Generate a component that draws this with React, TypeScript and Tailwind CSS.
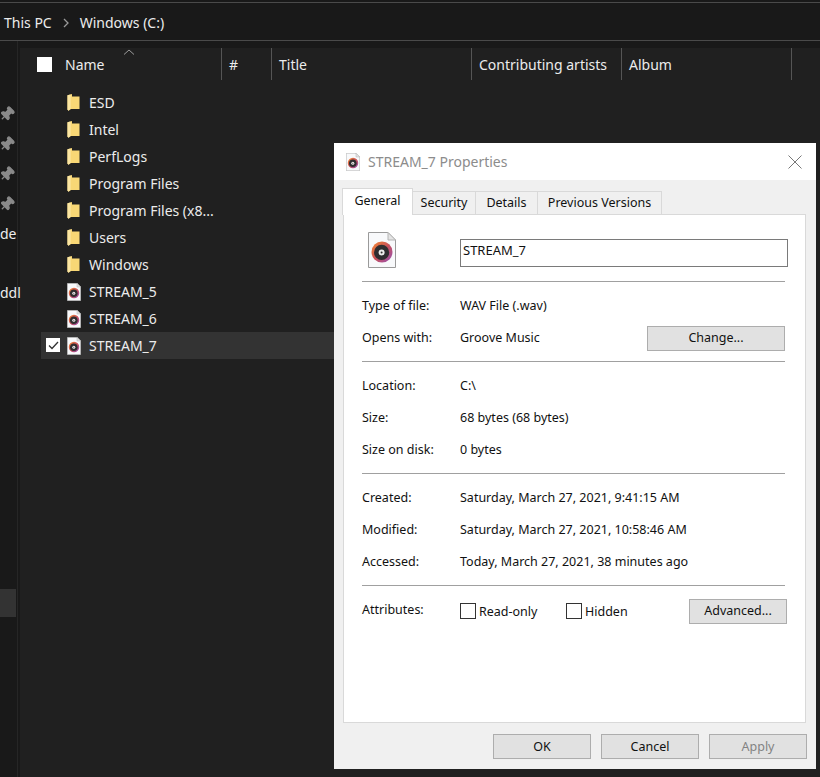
import { Pin } from "lucide-react";

const rows = [
  { name: "ESD", type: "folder" },
  { name: "Intel", type: "folder" },
  { name: "PerfLogs", type: "folder" },
  { name: "Program Files", type: "folder" },
  { name: "Program Files (x8...", type: "folder" },
  { name: "Users", type: "folder" },
  { name: "Windows", type: "folder" },
  { name: "STREAM_5", type: "wav" },
  { name: "STREAM_6", type: "wav" },
  { name: "STREAM_7", type: "wav", selected: true },
];

const columns = [
  { label: "#", width: "w-[50px]" },
  { label: "Title", width: "w-[200px]" },
  { label: "Contributing artists", width: "w-[150px]" },
  { label: "Album", width: "w-[170px]" },
];

function FolderIcon() {
  return (
    <svg width="13" height="17" viewBox="0 0 13 17" className="shrink-0">
      <path d="M0.5 1.2 L5 0 L5 2.5 L12.5 2.5 L12.5 15 L4 15 L1.5 16.8 L0.5 15.5 Z" fill="#f8d775" />
      <path d="M0.5 1.2 L3.6 0.4 L3.6 14.8 L1.5 16.8 L0.5 15.5 Z" fill="#fbe6a2" />
    </svg>
  );
}

function WavIcon({ width, height }: { width: number; height: number }) {
  return (
    <svg width={width} height={height} viewBox="0 0 28 36" className="shrink-0">
      <defs>
        <linearGradient id="disc" x1="0" y1="0" x2="1" y2="1">
          <stop offset="0" stopColor="#f58a30" />
          <stop offset="0.5" stopColor="#c8505a" />
          <stop offset="1" stopColor="#9450b8" />
        </linearGradient>
      </defs>
      <path d="M0.5 0.5 H20 L27.5 8 V35.5 H0.5 Z" fill="#f8f9fb" stroke="#9a9a9a" />
      <path d="M20 0.5 V8 H27.5 Z" fill="#e4e4e4" stroke="#b4b4b4" />
      <circle cx="14" cy="20" r="10.5" fill="url(#disc)" />
      <circle cx="13.6" cy="20.4" r="7.6" fill="#2f2d30" />
      <circle cx="13.6" cy="20.4" r="3" fill="#ececec" />
      <circle cx="13.6" cy="20.4" r="1" fill="#333" />
    </svg>
  );
}

function Divider() {
  return <div className="h-px bg-[#a0a0a0] mr-[20px]" />;
}

function InfoRow({ label, value }: { label: string; value: string }) {
  return (
    <div className="flex items-center h-[16px]">
      <span className="w-[98px] shrink-0">{label}</span>
      <span>{value}</span>
    </div>
  );
}

function DialogButton({ label, className }: { label: string; className?: string }) {
  return (
    <div className={`w-[98px] h-[25px] flex items-center justify-center border border-[#adadad] bg-[#e1e1e1] ${className ?? ""}`}>
      {label}
    </div>
  );
}

function PropertiesDialog() {
  return (
    <div className="absolute left-[334px] top-[143px] w-[482px] h-[626px] flex flex-col bg-[#f0f0f0] text-[12.5px] text-[#111] font-['Noto_Sans',sans-serif]">
      <div className="h-[37px] bg-white flex items-center pl-[12px] shrink-0">
        <WavIcon width={14} height={18} />
        <span className="ml-[8px] text-[14px] text-[#8c8c8c]">STREAM_7 Properties</span>
        <svg width="14" height="14" viewBox="0 0 14 14" className="ml-auto mr-[14px]">
          <path d="M0.5 0.5 L13.5 13.5 M13.5 0.5 L0.5 13.5" stroke="#777" strokeWidth="1" />
        </svg>
      </div>

      <div className="flex items-end h-[35px] ml-[8px] shrink-0 relative z-10">
        <div className="h-[27px] w-[71px] flex items-start justify-center pt-[3px] bg-white border border-b-0 border-[#d9d9d9]">General</div>
        <div className="h-[24px] w-[63px] flex items-center justify-center bg-[#f0f0f0] border border-l-0 border-[#d9d9d9]">Security</div>
        <div className="h-[24px] w-[62px] flex items-center justify-center bg-[#f0f0f0] border border-l-0 border-[#d9d9d9]">Details</div>
        <div className="h-[24px] w-[124px] flex items-center justify-center bg-[#f0f0f0] border border-l-0 border-[#d9d9d9]">Previous Versions</div>
      </div>

      <div className="ml-[9px] w-[463px] h-[509px] -mt-px bg-white border border-[#d9d9d9] pl-[18px] shrink-0 relative">
        <div className="flex items-start pt-[18px] h-[66px]">
          <div className="ml-[6px] w-[92px] -mt-[1px]">
            <WavIcon width={28} height={36} />
          </div>
          <div className="w-[328px] h-[28px] mt-[6px] border border-[#7a7a7a] flex items-center pl-[2px] pb-[5px] text-[13px]">STREAM_7</div>
        </div>
        <Divider />
        <div className="pt-[16px]"><InfoRow label="Type of file:" value="WAV File (.wav)" /></div>
        <div className="flex items-center h-[16px] mt-[16px]">
          <span className="w-[98px] shrink-0">Opens with:</span>
          <span>Groove Music</span>
          <DialogButton label="Change..." className="ml-auto mr-[20px] w-[138px]" />
        </div>
        <div className="pt-[15px]"><Divider /></div>
        <div className="pt-[16px] flex flex-col gap-[16px]">
          <InfoRow label="Location:" value="C:\" />
          <InfoRow label="Size:" value="68 bytes (68 bytes)" />
          <InfoRow label="Size on disk:" value="0 bytes" />
        </div>
        <div className="pt-[15px]"><Divider /></div>
        <div className="pt-[16px] flex flex-col gap-[16px]">
          <InfoRow label="Created:" value="Saturday, March 27, 2021, 9:41:15 AM" />
          <InfoRow label="Modified:" value="Saturday, March 27, 2021, 10:58:46 AM" />
          <InfoRow label="Accessed:" value="Today, March 27, 2021, 38 minutes ago" />
        </div>
        <div className="pt-[15px]"><Divider /></div>
        <div className="flex items-center h-[16px] mt-[17px]">
          <span className="w-[98px] shrink-0 pb-[2px]">Attributes:</span>
          <span className="w-[16px] h-[16px] border border-[#333] bg-white" />
          <span className="ml-[3px] w-[87px] mt-[3px]">Read-only</span>
          <span className="w-[16px] h-[16px] border border-[#333] bg-white" />
          <span className="ml-[3px] mt-[3px]">Hidden</span>
          <DialogButton label="Advanced..." className="ml-auto mr-[18px]" />
        </div>
      </div>

      <div className="flex justify-end gap-[10px] mt-[11px] mr-[9px]">
        <DialogButton label="OK" className="pt-[2px]" />
        <DialogButton label="Cancel" className="pt-[2px]" />
        <DialogButton label="Apply" className="pt-[2px] bg-[#cccccc] text-[#838383]" />
      </div>
    </div>
  );
}

export default function App() {
  return (
    <div className="relative w-[820px] h-[777px] overflow-hidden flex flex-col bg-[#191919] text-[14px] text-[#ececec] font-['Noto_Sans',sans-serif]">
      <div className="h-[39px] shrink-0 mt-[2px] border-t border-b border-[#4a4a4a] flex items-center pl-[4px] pt-[2px] bg-[#191919]">
        <span>This PC</span>
        <svg width="8" height="10" viewBox="0 0 8 10" className="mx-[10px]">
          <path d="M2 1 L6 5 L2 9" fill="none" stroke="#9a9a9a" strokeWidth="1.3" />
        </svg>
        <span>Windows (C:)</span>
      </div>

      <div className="flex flex-1 pt-[7px] min-h-0">
        <div className="w-[18px] shrink-0 relative -mt-[7px] border-r border-[#262626]">
          <div className="flex flex-col items-center gap-[14px] pt-[65px] w-[14px]">
            <Pin size={16} className="rotate-45 text-[#8a8a8a]" fill="#8a8a8a" />
            <Pin size={16} className="rotate-45 text-[#8a8a8a]" fill="#8a8a8a" />
            <Pin size={16} className="rotate-45 text-[#8a8a8a]" fill="#8a8a8a" />
            <Pin size={16} className="rotate-45 text-[#8a8a8a]" fill="#8a8a8a" />
          </div>
          <div className="absolute left-0 top-[182px]">de</div>
          <div className="absolute left-0 top-[241px]">ddl</div>
          <div className="absolute left-0 top-[548px] w-[16px] h-[28px] bg-[#333333]" />
        </div>

        <div className="flex-1 bg-[#202020] ml-[2px]">
          <div className="flex h-[32px] items-center relative">
            <span className="w-[15px] h-[15px] bg-white ml-[17px]" />
            <span className="ml-[13px] w-[156px]">Name</span>
            <svg width="12" height="6" viewBox="0 0 12 6" className="absolute left-[103px] top-[1px]">
              <path d="M1 5.5 L6 1 L11 5.5" fill="none" stroke="#9a9a9a" />
            </svg>
            {columns.map((c) => (
              <div key={c.label} className={`${c.width} h-full flex items-center pl-[7px] border-l border-[#555]`}>
                {c.label}
              </div>
            ))}
            <div className="h-full border-l border-[#555]" />
          </div>

          <div className="pt-[9px] pl-[21px]">
            {rows.map((r) => (
              <div key={r.name} className={`h-[27px] w-[293px] flex items-center relative ${r.selected ? "bg-[#333333]" : ""}`}>
                {r.selected && (
                  <div className="absolute left-[5px] top-[6px] w-[14px] h-[14px] bg-white flex items-center justify-center">
                    <svg width="11" height="9" viewBox="0 0 11 9">
                      <path d="M1 4.5 L4 7.5 L10 1" fill="none" stroke="#333" strokeWidth="1.3" />
                    </svg>
                  </div>
                )}
                <div className="ml-[26px] w-[22px] flex">
                  {r.type === "folder" ? <FolderIcon /> : <WavIcon width={14} height={18} />}
                </div>
                <span>{r.name}</span>
              </div>
            ))}
          </div>
        </div>
      </div>

      <PropertiesDialog />
    </div>
  );
}
